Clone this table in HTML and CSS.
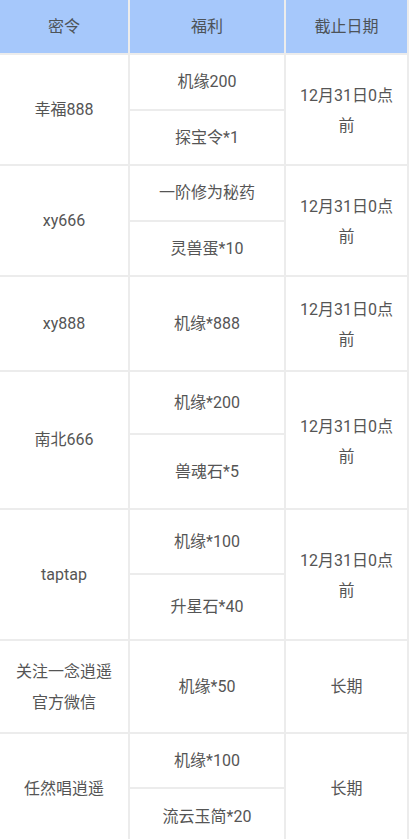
FILE: index.html
```html
<!DOCTYPE html>
<html lang="zh">
<head>
<meta charset="utf-8">
<link rel="stylesheet" href="styles.css">
</head>
<body>
<div class="table">
  <div class="cell head">密令</div>
  <div class="cell head">福利</div>
  <div class="cell head">截止日期</div>

  <div class="cell span2">幸福888</div>
  <div class="cell">机缘200</div>
  <div class="cell span2 date">12月31日0点前</div>
  <div class="cell">探宝令*1</div>

  <div class="cell span2">xy666</div>
  <div class="cell">一阶修为秘药</div>
  <div class="cell span2 date">12月31日0点前</div>
  <div class="cell">灵兽蛋*10</div>

  <div class="cell">xy888</div>
  <div class="cell">机缘*888</div>
  <div class="cell date">12月31日0点前</div>

  <div class="cell span2">南北666</div>
  <div class="cell">机缘*200</div>
  <div class="cell span2 date">12月31日0点前</div>
  <div class="cell">兽魂石*5</div>

  <div class="cell span2">taptap</div>
  <div class="cell">机缘*100</div>
  <div class="cell span2 date">12月31日0点前</div>
  <div class="cell">升星石*40</div>

  <div class="cell multi">关注一念逍遥官方微信</div>
  <div class="cell">机缘*50</div>
  <div class="cell">长期</div>

  <div class="cell span2">任然唱逍遥</div>
  <div class="cell">机缘*100</div>
  <div class="cell span2">长期</div>
  <div class="cell">流云玉简*20</div>
</div>
</body>
</html>
```

FILE: styles.css
```css
html, body {
  margin: 0;
  padding: 0;
  background: #ffffff;
}

.table {
  display: grid;
  width: 407px;
  padding-right: 2px;
  background: #ececec;
  grid-template-columns: 128px 154px 121px;
  grid-template-rows: 53px 54px 53px 54px 53px 93px 61px 73px 63px 64px 91px 53px 55px;
  gap: 2px;
  font-family: Roboto, "Noto Sans CJK SC", sans-serif;
  font-size: 16px;
  color: #555555;
}

.cell {
  background: #ffffff;
  display: flex;
  align-items: center;
  justify-content: center;
  text-align: center;
  line-height: 30px;
  padding: 0 10px;
}

.head {
  background: #a6c8fb;
  color: #4d5358;
}

.span2 {
  grid-row: span 2;
}

.date {
  padding: 3px 10px 0;
}

.multi {
  padding: 0 14px;
  line-height: 31px;
}
```
